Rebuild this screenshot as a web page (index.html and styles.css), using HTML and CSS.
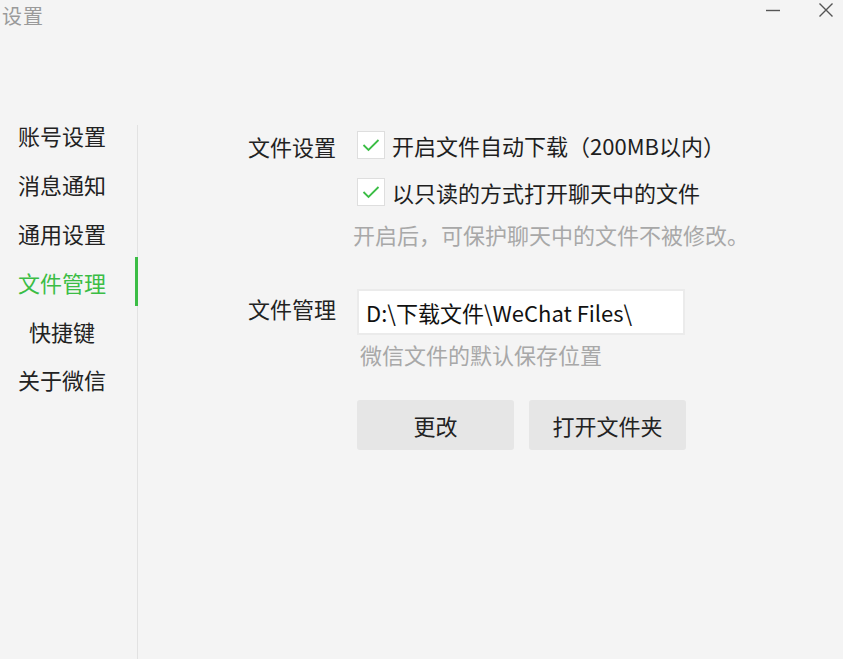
FILE: index.html
```html
<!DOCTYPE html>
<html lang="zh-CN">

<head>
    <meta charset="UTF-8">
    <meta name="viewport" content="width=device-width, initial-scale=1.0">
    <title>设置</title>
    <link rel="stylesheet" href="styles.css">
</head>

<body>
    <div class="window">
        <header class="titlebar">
            <span class="title">设置</span>
            <div class="controls">
                <button class="ctrl" aria-label="最小化">
                    <svg width="16" height="16" viewBox="0 0 16 16">
                        <path d="M1 8.5h14" stroke="#555" stroke-width="1.4" fill="none" />
                    </svg>
                </button>
                <button class="ctrl" aria-label="关闭">
                    <svg width="16" height="16" viewBox="0 0 16 16">
                        <path d="M1.5 1.5l13 13M14.5 1.5l-13 13" stroke="#555" stroke-width="1.4" fill="none" />
                    </svg>
                </button>
            </div>
        </header>

        <div class="layout">
            <nav class="sidebar">
                <a class="nav-item">账号设置</a>
                <a class="nav-item">消息通知</a>
                <a class="nav-item">通用设置</a>
                <a class="nav-item active">文件管理</a>
                <a class="nav-item">快捷键</a>
                <a class="nav-item">关于微信</a>
            </nav>
            <div class="divider"></div>

            <main class="content">
                <section class="setting">
                    <div class="setting-label">文件设置</div>
                    <div class="setting-body">
                        <label class="check-row">
                            <span class="checkbox">
                                <svg width="18" height="14" viewBox="0 0 18 14">
                                    <path d="M1.5 7l5 5L16.5 2" stroke="#3bbd45" stroke-width="1.8" fill="none" />
                                </svg>
                            </span>
                            开启文件自动下载（200MB以内）
                        </label>
                        <label class="check-row second">
                            <span class="checkbox">
                                <svg width="18" height="14" viewBox="0 0 18 14">
                                    <path d="M1.5 7l5 5L16.5 2" stroke="#3bbd45" stroke-width="1.8" fill="none" />
                                </svg>
                            </span>
                            以只读的方式打开聊天中的文件
                        </label>
                        <p class="hint hint-read">开启后，可保护聊天中的文件不被修改。</p>
                    </div>
                </section>

                <section class="setting path-setting">
                    <div class="setting-label path-label">文件管理</div>
                    <div class="setting-body">
                        <div class="path-box">D:\下载文件\WeChat Files\</div>
                        <p class="hint hint-path">微信文件的默认保存位置</p>
                        <div class="actions">
                            <button class="btn">更改</button>
                            <button class="btn">打开文件夹</button>
                        </div>
                    </div>
                </section>
            </main>
        </div>
    </div>
</body>

</html>
```

FILE: styles.css
```css
* {
    margin: 0;
    padding: 0;
    box-sizing: border-box;
}

body {
    font-family: 'Noto Sans CJK SC', 'Noto Sans', sans-serif;
    background: #f4f4f4;
    color: #1e1e1e;
    width: 843px;
    height: 659px;
    overflow: hidden;
}

.window {
    height: 659px;
    display: flex;
    flex-direction: column;
}

/* title bar */
.titlebar {
    height: 110px;
    display: flex;
    justify-content: space-between;
    align-items: flex-start;
    padding: 2px 9px 0 2px;
}

.title {
    font-size: 20px;
    line-height: 28px;
    color: #9a9a9a;
    letter-spacing: 1px;
}

.controls {
    display: flex;
    gap: 37px;
}

.ctrl {
    width: 16px;
    height: 16px;
    border: none;
    background: none;
    display: flex;
}

/* layout */
.layout {
    flex: 1;
    display: flex;
}

.sidebar {
    width: 137px;
    display: flex;
    flex-direction: column;
    margin-top: 1px;
}

.nav-item {
    height: 48.8px;
    display: flex;
    align-items: center;
    justify-content: center;
    padding-right: 13px;
    font-size: 22px;
    color: #222;
    cursor: pointer;
    position: relative;
}

.nav-item.active {
    color: #3bbd45;
}

.nav-item.active::after {
    content: '';
    position: absolute;
    right: -1px;
    top: 0;
    bottom: 0;
    width: 3px;
    background: #3bbd45;
}

.divider {
    width: 1px;
    margin-top: 15px;
    background: #e2e2e2;
}

/* content */
.content {
    flex: 1;
    padding: 21px 0 0 110px;
}

.setting {
    display: grid;
    grid-template-columns: 109px 1fr;
}

.setting-label {
    font-size: 22px;
    line-height: 30px;
    color: #222;
}

.path-label {
    padding-top: 4px;
}

.check-row {
    display: flex;
    align-items: center;
    gap: 7px;
    height: 28px;
    font-size: 22px;
    color: #1e1e1e;
}

.check-row.second {
    margin-top: 19px;
}

.checkbox {
    width: 28px;
    height: 28px;
    background: #fff;
    border: 1px solid #dedede;
    display: flex;
    align-items: center;
    justify-content: center;
}

.hint {
    font-size: 22px;
    line-height: 28px;
    color: #a8a8a8;
}

.hint-read {
    margin: 14px 0 0 -4px;
}

.path-setting {
    margin-top: 41px;
}

.path-box {
    width: 328px;
    height: 46px;
    background: #fff;
    border: 2px solid #ebebeb;
    padding-left: 7px;
    display: flex;
    align-items: center;
    font-size: 22px;
    color: #111;
}

.hint-path {
    margin-top: 5px;
    padding-left: 3px;
}

.actions {
    display: flex;
    gap: 15px;
    margin-top: 32px;
}

.btn {
    width: 157px;
    height: 50px;
    border: none;
    border-radius: 3px;
    background: #e6e6e6;
    font-family: inherit;
    font-size: 22px;
    color: #222;
    cursor: pointer;
}
```
